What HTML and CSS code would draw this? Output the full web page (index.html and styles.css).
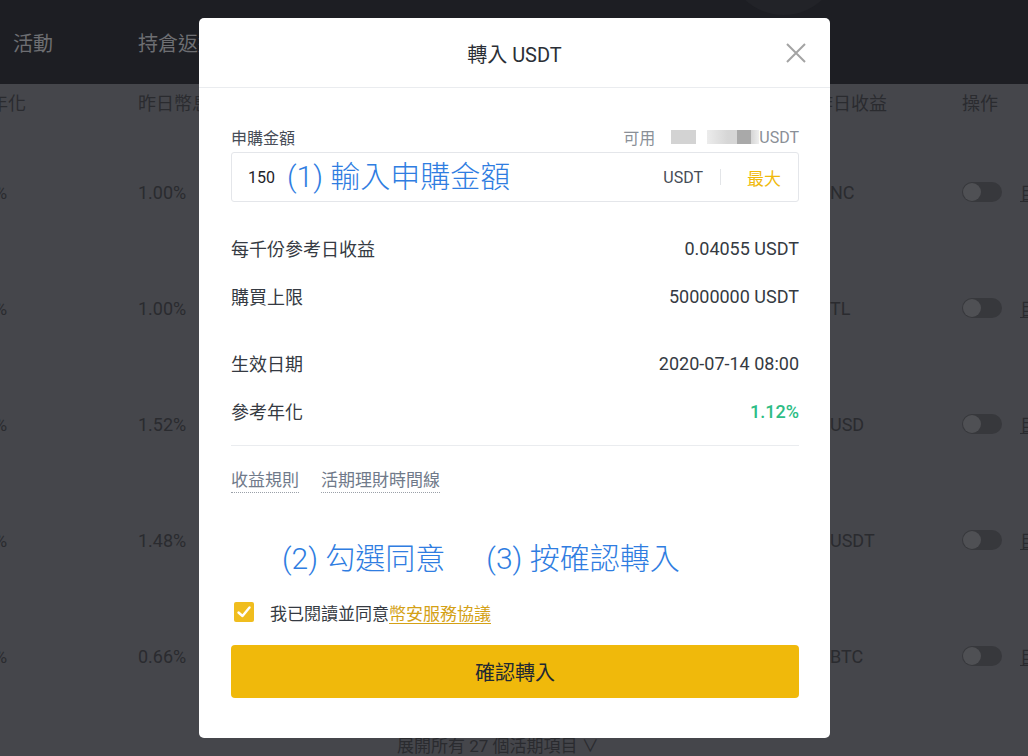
FILE: index.html
```html
<!DOCTYPE html>
<html lang="zh-Hant">
<head>
  <meta charset="UTF-8" />
  <title>轉入 USDT</title>
  <meta name="viewport" content="width=device-width, initial-scale=1" />
  <link rel="stylesheet" href="styles.css">
</head>
<body>
  <div class="page">
    <div class="topbar">
      <div class="blob"></div>
      <div class="tab">活動</div>
      <div class="tab">持倉返還</div>
    </div>

    <div class="thead">
      <div class="c-rate">年化</div>
      <div class="c-yday">昨日幣息</div>
      <div class="c-coin head">昨日收益</div>
      <div class="c-op">操作</div>
    </div>

    <div class="tbody">
      <div class="row">
        <div class="c-rate">%</div>
        <div class="c-yday">1.00%</div>
        <div class="c-coin">NC</div>
        <div class="c-op"><span class="switch"></span></div>
        <div class="c-link">目標</div>
      </div>
      <div class="row">
        <div class="c-rate">%</div>
        <div class="c-yday">1.00%</div>
        <div class="c-coin">TL</div>
        <div class="c-op"><span class="switch"></span></div>
        <div class="c-link">目標</div>
      </div>
      <div class="row">
        <div class="c-rate">%</div>
        <div class="c-yday">1.52%</div>
        <div class="c-coin">USD</div>
        <div class="c-op"><span class="switch"></span></div>
        <div class="c-link">目標</div>
      </div>
      <div class="row">
        <div class="c-rate">%</div>
        <div class="c-yday">1.48%</div>
        <div class="c-coin">USDT</div>
        <div class="c-op"><span class="switch"></span></div>
        <div class="c-link">目標</div>
      </div>
      <div class="row">
        <div class="c-rate">%</div>
        <div class="c-yday">0.66%</div>
        <div class="c-coin">BTC</div>
        <div class="c-op"><span class="switch"></span></div>
        <div class="c-link">目標</div>
      </div>
    </div>

    <div class="more">展開所有 27 個活期項目 ∨</div>
  </div>

  <div class="modal">
    <div class="modal-head">
      <h1>轉入 USDT</h1>
      <svg class="close" width="22" height="22" viewBox="0 0 22 22">
        <path d="M2 2 L20 20 M20 2 L2 20" stroke="#a3a3a3" stroke-width="2" fill="none" />
      </svg>
    </div>

    <div class="modal-body">
      <div class="label-row">
        <span>申購金額</span>
        <span class="avail">可用 <i class="blur b1"></i><i class="blur b2"><i class="b2-dark"></i></i>USDT</span>
      </div>

      <div class="amount">
        <span class="value">150</span>
        <span class="note">(1) 輸入申購金額</span>
        <span class="unit">USDT</span>
        <span class="sep"></span>
        <span class="max">最大</span>
      </div>

      <div class="info first"><span>每千份參考日收益</span><span>0.04055 USDT</span></div>
      <div class="info"><span>購買上限</span><span>50000000 USDT</span></div>
      <div class="info gap"><span>生效日期</span><span>2020-07-14 08:00</span></div>
      <div class="info"><span>參考年化</span><span class="green">1.12%</span></div>

      <div class="divider"></div>

      <div class="links">
        <span>收益規則</span>
        <span>活期理財時間線</span>
      </div>

      <div class="notes">
        <span class="note">(2) 勾選同意</span>
        <span class="note">(3) 按確認轉入</span>
      </div>

      <div class="agree">
        <span class="check">
          <svg width="20" height="20" viewBox="0 0 20 20">
            <path d="M4.5 10.5 L8.5 14 L15.5 5.5" stroke="#ffffff" stroke-width="2.4" fill="none" stroke-linecap="round" stroke-linejoin="round" />
          </svg>
        </span>
        <span>我已閱讀並同意<a href="#">幣安服務協議</a></span>
      </div>

      <button class="confirm">確認轉入</button>
    </div>
  </div>
</body>
</html>
```

FILE: styles.css
```css
:root {
  --yellow: #f0b90b;
  --blue: #2f7de1;
  --text: #1e2329;
  --line: #eaecef;
}

* {
  box-sizing: border-box;
  margin: 0;
  padding: 0;
}

body {
  font-family: Roboto, "Noto Sans CJK TC", sans-serif;
  background: #45464b;
  width: 1028px;
  height: 756px;
  overflow: hidden;
  position: relative;
}

/* background page (dimmed) */
.page {
  display: flex;
  flex-direction: column;
  color: #2a2b2f;
  font-size: 18px;
}

.topbar {
  height: 84px;
  background: #1d1e23;
  display: flex;
  align-items: center;
  padding-left: 13px;
  position: relative;
  overflow: hidden;
}

.blob {
  position: absolute;
  left: 727px;
  top: -98px;
  width: 113px;
  height: 113px;
  border-radius: 50%;
  background: #222328;
}

.tab {
  width: 125px;
  flex-shrink: 0;
  color: #6d6e72;
  font-size: 20px;
  white-space: nowrap;
}

.thead, .row {
  display: flex;
  align-items: center;
  white-space: nowrap;
}

.thead > div, .row > div {
  flex-shrink: 0;
}

.thead {
  height: 36px;
}

.tbody {
  padding-top: 14px;
}

.row {
  height: 116px;
}

.c-rate {
  width: 138px;
  overflow: hidden;
  text-indent: -10px;
}

.row .c-rate {
  text-indent: -6px;
}

.c-yday {
  width: 677px;
}

.c-coin {
  width: 147px;
  padding-left: 15px;
}

.c-coin.head {
  padding-left: 0;
}

.c-op {
  width: 58px;
  display: flex;
  align-items: center;
}

.c-link {
  text-decoration: underline;
}

.switch {
  width: 40px;
  height: 20px;
  border-radius: 10px;
  background: #37383c;
  position: relative;
}

.switch::after {
  content: "";
  position: absolute;
  left: 1px;
  top: 1px;
  width: 18px;
  height: 18px;
  border-radius: 50%;
  background: #4f5054;
}

.more {
  margin-top: 18px;
  padding-left: 397px;
  font-size: 17px;
}

/* dialog */
.modal {
  position: absolute;
  top: 18px;
  left: 199px;
  width: 631px;
  height: 720px;
  background: #ffffff;
  border-radius: 5px;
  color: var(--text);
}

.modal-head {
  height: 70px;
  border-bottom: 1px solid var(--line);
  display: flex;
  align-items: center;
  justify-content: center;
  position: relative;
}

.modal-head h1 {
  font-size: 20px;
  font-weight: normal;
  color: #2b2f36;
  margin-top: 1px;
}

.close {
  position: absolute;
  right: 23px;
  top: 24px;
}

.modal-body {
  padding: 0 31px 0 32px;
}

.label-row {
  margin-top: 39px;
  height: 20px;
  display: flex;
  justify-content: space-between;
  align-items: center;
  font-size: 16px;
  color: #474d57;
}

.avail {
  display: flex;
  align-items: center;
  color: #8a8f97;
}

.blur {
  display: inline-block;
  height: 14px;
  background: #d3d3d3;
}

.b1 {
  width: 25px;
  margin: 0 11px 0 16px;
}

.b2 {
  width: 52px;
  background: linear-gradient(90deg, #ececec, #d6d6d6 40%, #d6d6d6 85%, #eeeeee);
  position: relative;
}

.b2-dark {
  position: absolute;
  left: 30px;
  top: 0;
  width: 14px;
  height: 14px;
  background: #a9a9a9;
}

.amount {
  margin-top: 5px;
  height: 50px;
  border: 1px solid #e4e6ea;
  border-radius: 3px;
  display: flex;
  align-items: center;
  padding: 0 17px 0 16px;
}

.value {
  font-size: 16px;
  color: var(--text);
}

.note {
  color: var(--blue);
  font-size: 30px;
  font-weight: 300;
  line-height: 36px;
  white-space: nowrap;
}

.amount .note {
  margin-left: 12px;
  flex: 1;
}

.unit {
  font-size: 16px;
  color: #474d57;
}

.sep {
  width: 1px;
  height: 16px;
  background: #e3e5e8;
  margin: 0 26px 0 17px;
}

.max {
  color: var(--yellow);
  font-size: 17px;
}

.info {
  display: flex;
  justify-content: space-between;
  align-items: center;
  height: 24px;
  margin-top: 24px;
  font-size: 18px;
  color: #353a42;
}

.info.first {
  margin-top: 34px;
}

.info.gap {
  margin-top: 43px;
}

.green {
  color: #2ebd85;
  font-weight: 500;
}

.divider {
  height: 1px;
  background: var(--line);
  margin-top: 22px;
}

.links {
  margin-top: 22px;
  display: flex;
  gap: 22px;
  font-size: 17px;
  color: #707a8a;
  line-height: 24px;
}

.links span {
  border-bottom: 1px dotted #9aa0a8;
}

.notes {
  margin-top: 48px;
  padding-left: 51px;
  display: flex;
  gap: 41px;
}

.agree {
  margin-top: 23px;
  height: 24px;
  display: flex;
  align-items: center;
  font-size: 17px;
  color: #353a42;
}

.check {
  width: 20px;
  height: 20px;
  margin-left: 3px;
  margin-right: 16px;
  border-radius: 2px;
  background: #f0bd1e;
  display: flex;
}

.agree a {
  color: #d4a116;
  text-decoration: underline;
  text-underline-offset: 3px;
}

.confirm {
  margin-top: 21px;
  width: 100%;
  height: 53px;
  border: none;
  border-radius: 4px;
  background: var(--yellow);
  color: #212833;
  font-family: Roboto, "Noto Sans CJK TC", sans-serif;
  font-size: 20px;
  cursor: pointer;
}
```
